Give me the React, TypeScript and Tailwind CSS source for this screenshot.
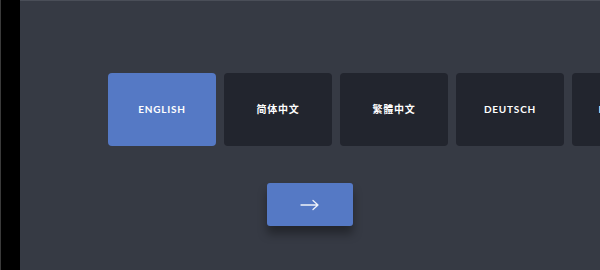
import { useState } from "react";

const languages = [
  { id: "en", label: "ENGLISH" },
  { id: "zh-hans", label: "简体中文" },
  { id: "zh-hant", label: "繁體中文" },
  { id: "de", label: "DEUTSCH" },
  { id: "fr", label: "FRANÇAIS" },
];

function ArrowIcon() {
  return (
    <svg width="20" height="12" viewBox="0 0 20 12" fill="none" className="text-white/90">
      <path d="M1 6h17M13 1.5L18 6l-5 4.5" stroke="currentColor" strokeWidth="1.3" strokeLinecap="round" strokeLinejoin="round" />
    </svg>
  );
}

export default function App() {
  const [selected, setSelected] = useState("en");

  return (
    <div className="w-[600px] h-[270px] flex bg-black font-['Lato','Noto_Sans_CJK_SC',sans-serif] overflow-hidden">
      {/* Left bezel */}
      <div className="w-[20px] h-full bg-black border-l border-[#3a3a3a] shrink-0" />

      {/* Main panel */}
      <div className="flex-1 h-full bg-[#363a44] border-t border-[#4a4e58] overflow-hidden flex flex-col">
        <div className="pt-[72px] pl-[88px] flex gap-2">
          {languages.map((lang) => {
            const active = selected === lang.id;
            return (
              <button
                key={lang.id}
                onClick={() => setSelected(lang.id)}
                className={`w-[108px] h-[73px] shrink-0 rounded flex items-center justify-center text-[10px] font-bold tracking-[0.08em] text-white ${active
                  ? "bg-[#5579c5]"
                  : "bg-[#22252e]"
                  }`}
              >
                {lang.label}
              </button>
            );
          })}
        </div>

        <div className="flex justify-center pt-[37px]">
          <button className="w-[86px] h-[43px] rounded-[3px] bg-[#5579c5] flex items-center justify-center shadow-[0_8px_10px_rgba(0,0,0,0.35)]">
            <ArrowIcon />
          </button>
        </div>
      </div>
    </div>
  );
}
